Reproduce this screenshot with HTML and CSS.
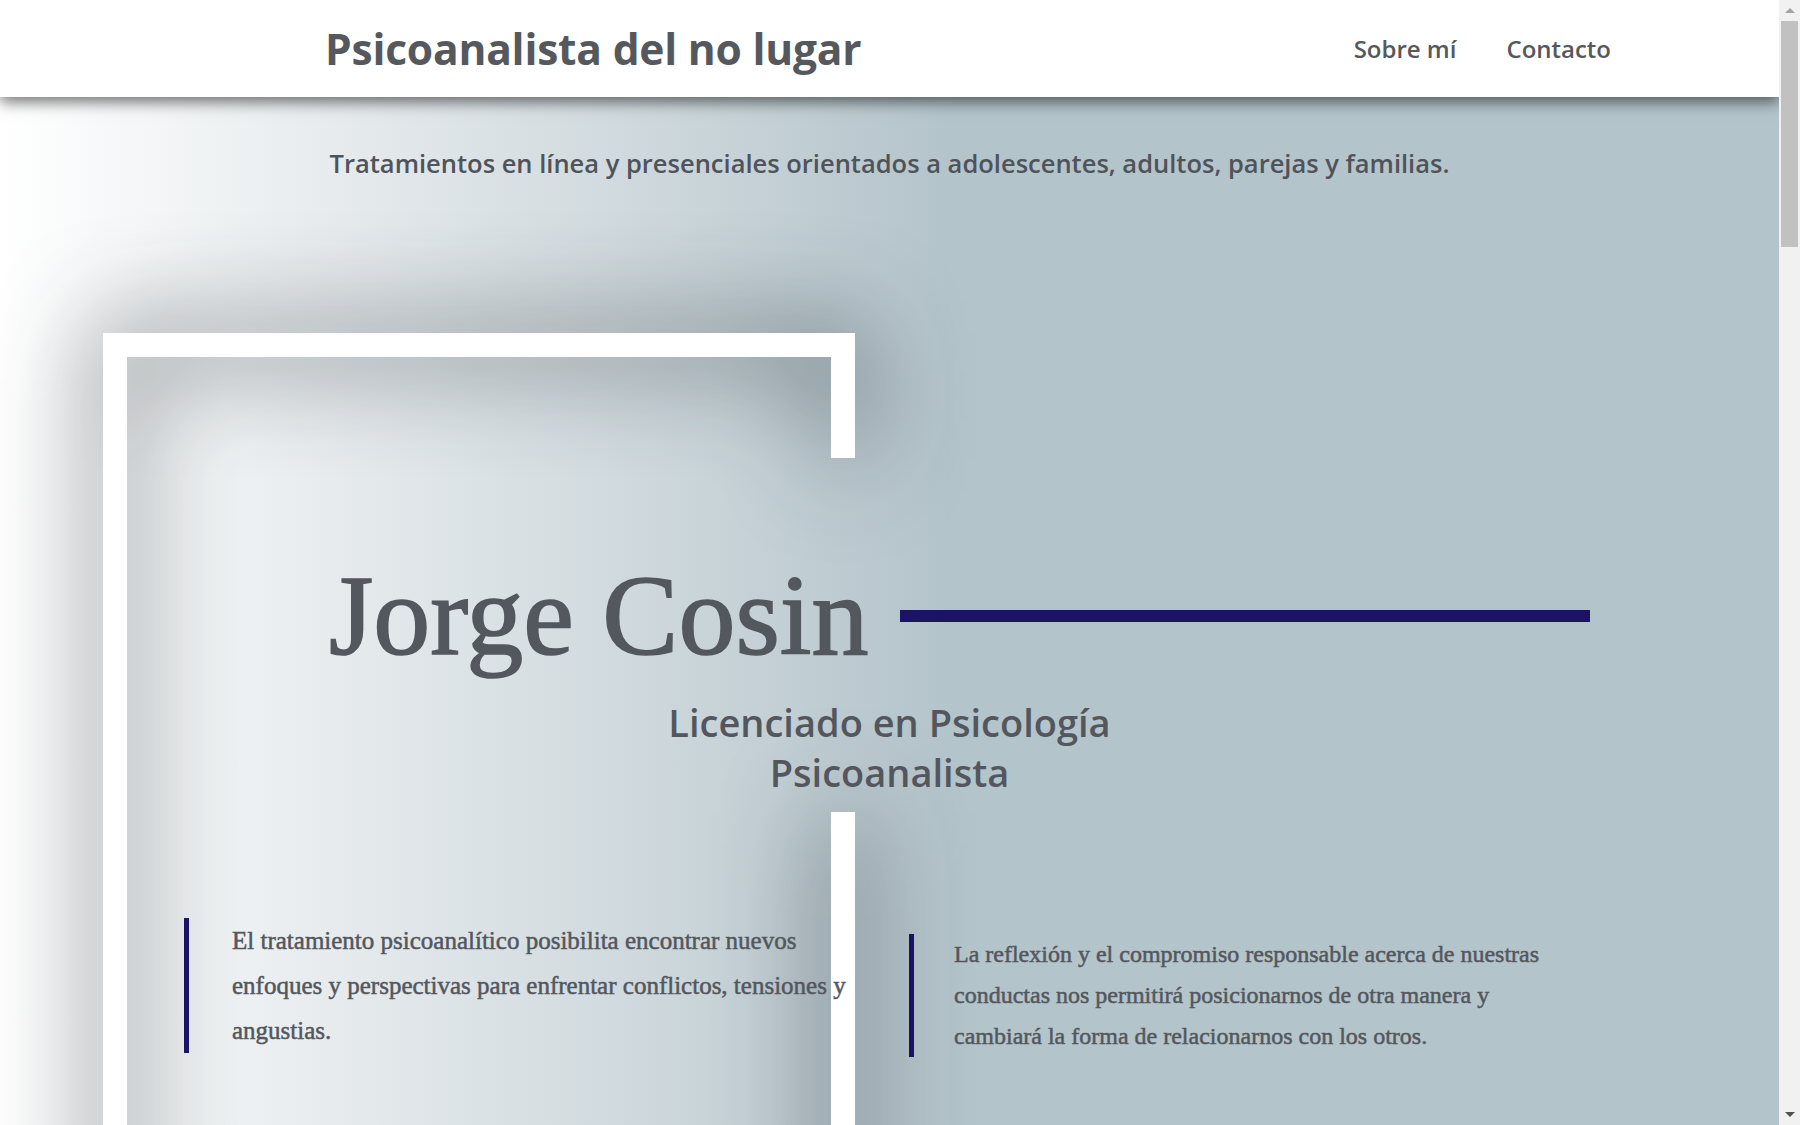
FILE: index.html
```html
<!DOCTYPE html>
<html lang="es">
<head>
<meta charset="utf-8">
<title>Psicoanalista del no lugar</title>
<link rel="stylesheet" href="styles.css">
</head>
<body>
<header class="site-header">
  <a class="brand" href="#">Psicoanalista del no lugar</a>
  <nav class="nav">
    <a href="#">Sobre mí</a>
    <a href="#">Contacto</a>
  </nav>
</header>
<main class="hero">
  <div class="frame" aria-hidden="true">
    <span class="bar bar-top"></span>
    <span class="bar bar-left"></span>
    <span class="bar bar-right-upper"></span>
    <span class="bar bar-right-lower"></span>
  </div>
  <div class="hero-content">
    <p class="tagline">Tratamientos en línea y presenciales orientados a adolescentes, adultos, parejas y familias.</p>
    <div class="name-row">
      <h1 class="name">Jorge Cosin</h1>
      <span class="rule"></span>
    </div>
    <p class="titles">Licenciado en Psicología<br>Psicoanalista</p>
    <div class="quotes">
      <blockquote class="quote quote-left">
        <p>El tratamiento psicoanalítico posibilita encontrar nuevos enfoques y perspectivas para enfrentar conflictos, tensiones y angustias.</p>
      </blockquote>
      <blockquote class="quote quote-right">
        <p>La reflexión y el compromiso responsable acerca de nuestras conductas nos permitirá posicionarnos de otra manera y cambiará la forma de relacionarnos con los otros.</p>
      </blockquote>
    </div>
  </div>
</main>
<div class="scrollbar" aria-hidden="true">
  <span class="sb-btn sb-up"></span>
  <span class="sb-track"><span class="sb-thumb"></span></span>
  <span class="sb-btn sb-down"></span>
</div>
</body>
</html>
```

FILE: styles.css
```css
html, body {
  margin: 0;
  padding: 0;
}

body {
  padding-right: 21px;
  font-family: "Open Sans", "Noto Sans", sans-serif;
  color: #53575d;
  background: linear-gradient(90deg, #ffffff 0px, #e9edef 300px, #d2dbdf 600px, #b4c4cb 950px, #b4c4cb 100%);
}

.site-header {
  position: relative;
  z-index: 3;
  height: 97px;
  background: #ffffff;
  display: flex;
  align-items: center;
  justify-content: space-between;
  padding: 0 168px 0 325px;
  box-shadow: 0 5px 14px rgba(0, 0, 0, 0.55);
}

.brand {
  font-size: 42.5px;
  font-weight: 700;
  color: #55585d;
  text-decoration: none;
  letter-spacing: -0.2px;
}

.nav {
  display: flex;
  gap: 50px;
}

.nav a {
  font-size: 24px;
  font-weight: 600;
  color: #55585d;
  text-decoration: none;
}

.hero {
  position: relative;
  min-height: 5282px;
  padding-top: 48px;
}

.frame {
  position: absolute;
  left: 103px;
  top: 236px;
  width: 752px;
  height: 1400px;
  z-index: 0;
  filter: drop-shadow(0 0 50px rgba(25, 32, 40, 0.9));
}

.bar {
  position: absolute;
  background: #ffffff;
}

.bar-top {
  left: 0;
  top: 0;
  width: 100%;
  height: 24px;
}

.bar-left {
  left: 0;
  top: 0;
  width: 24px;
  height: 100%;
}

.bar-right-upper {
  right: 0;
  top: 0;
  width: 24px;
  height: 125px;
}

.bar-right-lower {
  right: 0;
  top: 479px;
  bottom: 0;
  width: 24px;
}

.hero-content {
  position: relative;
  z-index: 1;
}

.tagline {
  margin: 0;
  text-align: center;
  font-size: 25.5px;
  line-height: 36px;
  font-weight: 600;
  color: #4f535a;
}

.name-row {
  display: flex;
  align-items: center;
  gap: 32px;
  margin-top: 378px;
  padding-left: 329px;
}

.name {
  margin: 0;
  font-family: "Liberation Serif", "Times New Roman", serif;
  font-weight: 400;
  font-size: 114px;
  line-height: 114px;
  color: #53575e;
  -webkit-text-stroke: 1.6px #53575e;
}

.rule {
  width: 690px;
  height: 12px;
  background: #1b1464;
}

.titles {
  margin: 24px 0 0;
  text-align: center;
  font-size: 38px;
  line-height: 50px;
  font-weight: 600;
  color: #53575d;
}

.quotes {
  display: grid;
  grid-template-columns: 725px 680px;
  align-items: start;
  margin-top: 121px;
  padding-left: 184px;
}

.quote {
  margin: 0;
  border-left: 5px solid #1b1464;
  font-family: "Liberation Serif", "Times New Roman", serif;
  color: #53575d;
  -webkit-text-stroke: 0.5px #53575d;
}

.quote p {
  margin: 0;
}

.quote-left {
  padding-left: 43px;
  font-size: 25px;
  line-height: 45px;
}

.quote-left p {
  max-width: 640px;
}

.quote-right {
  margin-top: 16px;
  padding-left: 40px;
  font-size: 24px;
  line-height: 41px;
}

.quote-right p {
  max-width: 620px;
}

/* browser scrollbar, as it appears in the screenshot */
.scrollbar {
  position: fixed;
  top: 0;
  right: 0;
  width: 21px;
  height: 100vh;
  z-index: 10;
  background: #f1f1f1;
  display: flex;
  flex-direction: column;
}

.sb-btn {
  height: 21px;
  flex: none;
  display: flex;
  align-items: center;
  justify-content: center;
}

.sb-up::before {
  content: "";
  border-left: 5px solid transparent;
  border-right: 5px solid transparent;
  border-bottom: 5px solid #a3a3a3;
}

.sb-down::before {
  content: "";
  border-left: 5px solid transparent;
  border-right: 5px solid transparent;
  border-top: 5px solid #505050;
}

.sb-track {
  flex: 1;
  padding: 0 2px;
}

.sb-thumb {
  display: block;
  height: 226px;
  background: #c1c1c1;
}
```
